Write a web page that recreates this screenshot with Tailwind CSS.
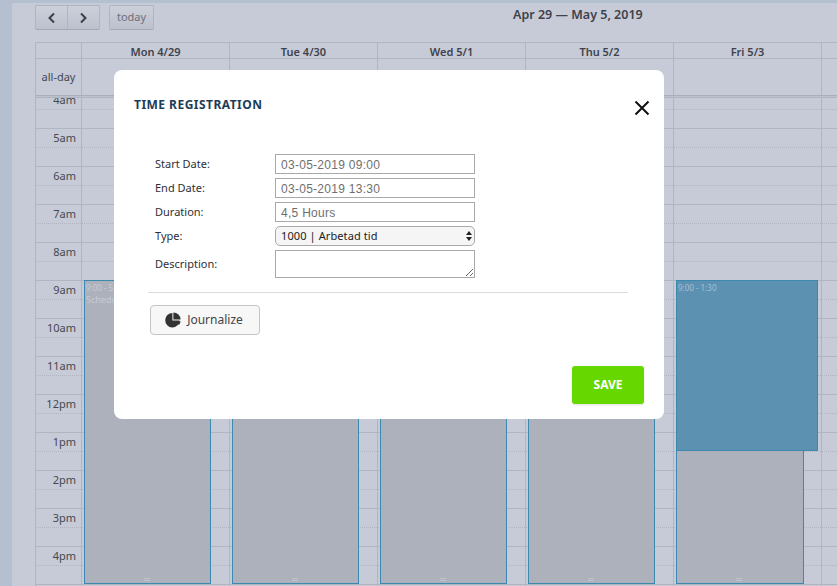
<!DOCTYPE html>
<html>
<head>
<meta charset="utf-8">
<script src="https://cdn.jsdelivr.net/npm/@tailwindcss/browser@4"></script>
</head>
<body class="m-0">
<div class="relative flex w-[837px] h-[586px] overflow-hidden bg-[#c6cbd7] font-['Noto_Sans',sans-serif] text-[#3a3d45]">
  <div class="w-[12px] shrink-0 bg-[#b4bfd0]"></div>
  <div class="flex flex-col flex-1 min-w-0">
    <div class="h-[3px] shrink-0 bg-[#b4bfd0]"></div>
    <div class="relative flex h-[39px] shrink-0 pl-[23px] pt-[2px]">
      <div class="flex h-[25px] w-[65px] border border-[#b0b5c1] border-b-[#a3a8b4] rounded-[2px] bg-gradient-to-b from-[#ccd0db] to-[#bcc1cd]">
        <div class="flex w-[32px] items-center justify-center border-r border-[#b0b5c1]">
          <svg width="9" height="12" viewBox="0 0 9 12" fill="none" stroke="#3c3f47" stroke-width="2"><path d="M7 1.5 2.5 6 7 10.5"/></svg>
        </div>
        <div class="flex flex-1 items-center justify-center">
          <svg width="9" height="12" viewBox="0 0 9 12" fill="none" stroke="#3c3f47" stroke-width="2"><path d="M2 1.5 6.5 6 2 10.5"/></svg>
        </div>
      </div>
      <div class="ml-[9px] flex h-[25px] w-[45px] items-center justify-center border border-[#b0b5c1] border-b-[#a3a8b4] rounded-[2px] bg-gradient-to-b from-[#ccd0db] to-[#bcc1cd] text-[11px] text-[#6d717b]">today</div>
      <div class="ml-[359px] -mt-[2px] h-[24px] leading-[24px] text-[12.5px] font-semibold text-[#3f424b] whitespace-nowrap">Apr 29 — May 5, 2019</div>
    </div>
    <div class="flex-1 min-h-0 ml-[23px] border-t border-l border-[#b0b5c1] flex flex-col">
      <div class="flex h-[16px] shrink-0 border-b border-[#b0b5c1] text-[11px] font-semibold leading-[17px] text-[#3f424b] text-center">
        <div class="w-[46px] border-r border-[#b0b5c1]"></div>
        <div class="w-[148px] border-r border-[#b0b5c1]">Mon 4/29</div>
        <div class="w-[148px] border-r border-[#b0b5c1]">Tue 4/30</div>
        <div class="w-[148px] border-r border-[#b0b5c1]">Wed 5/1</div>
        <div class="w-[148px] border-r border-[#b0b5c1]">Thu 5/2</div>
        <div class="w-[148px] border-r border-[#b0b5c1]">Fri 5/3</div>
        <div class="flex-1"></div>
      </div>
      <div class="flex h-[37px] shrink-0 border-b border-[#a9aebb] text-[11px]">
        <div class="w-[46px] border-r border-[#b0b5c1] flex items-center justify-center text-[#454851] pt-[1px]">all-day</div>
        <div class="w-[148px] border-r border-[#b0b5c1]"></div>
        <div class="w-[148px] border-r border-[#b0b5c1]"></div>
        <div class="w-[148px] border-r border-[#b0b5c1]"></div>
        <div class="w-[148px] border-r border-[#b0b5c1]"></div>
        <div class="w-[148px] border-r border-[#b0b5c1]"></div>
        <div class="flex-1"></div>
      </div>
      <div class="h-[2px] shrink-0 bg-[#bcc1cd] border-b border-[#b0b5c1]"></div>
      <div class="relative flex-1 min-h-0 overflow-hidden">
        <div class="-mt-[7px] text-[11px] leading-[17px] text-[#454851] text-right">
          <div class="h-[38px] border-b border-[#b0b5c1]"><div class="h-[19px] border-b border-dotted border-[#b0b5c1] w-full pr-[761px] box-border">4am</div></div>
          <div class="h-[38px] border-b border-[#b0b5c1]"><div class="h-[19px] border-b border-dotted border-[#b0b5c1] w-full pr-[761px] box-border">5am</div></div>
          <div class="h-[38px] border-b border-[#b0b5c1]"><div class="h-[19px] border-b border-dotted border-[#b0b5c1] w-full pr-[761px] box-border">6am</div></div>
          <div class="h-[38px] border-b border-[#b0b5c1]"><div class="h-[19px] border-b border-dotted border-[#b0b5c1] w-full pr-[761px] box-border">7am</div></div>
          <div class="h-[38px] border-b border-[#b0b5c1]"><div class="h-[19px] border-b border-dotted border-[#b0b5c1] w-full pr-[761px] box-border">8am</div></div>
          <div class="h-[38px] border-b border-[#b0b5c1]"><div class="h-[19px] border-b border-dotted border-[#b0b5c1] w-full pr-[761px] box-border">9am</div></div>
          <div class="h-[38px] border-b border-[#b0b5c1]"><div class="h-[19px] border-b border-dotted border-[#b0b5c1] w-full pr-[761px] box-border">10am</div></div>
          <div class="h-[38px] border-b border-[#b0b5c1]"><div class="h-[19px] border-b border-dotted border-[#b0b5c1] w-full pr-[761px] box-border">11am</div></div>
          <div class="h-[38px] border-b border-[#b0b5c1]"><div class="h-[19px] border-b border-dotted border-[#b0b5c1] w-full pr-[761px] box-border">12pm</div></div>
          <div class="h-[38px] border-b border-[#b0b5c1]"><div class="h-[19px] border-b border-dotted border-[#b0b5c1] w-full pr-[761px] box-border">1pm</div></div>
          <div class="h-[38px] border-b border-[#b0b5c1]"><div class="h-[19px] border-b border-dotted border-[#b0b5c1] w-full pr-[761px] box-border">2pm</div></div>
          <div class="h-[38px] border-b border-[#b0b5c1]"><div class="h-[19px] border-b border-dotted border-[#b0b5c1] w-full pr-[761px] box-border">3pm</div></div>
          <div class="h-[38px] border-b border-[#b0b5c1]"><div class="h-[19px] border-b border-dotted border-[#b0b5c1] w-full pr-[761px] box-border">4pm</div></div>
        </div>
        <div class="absolute inset-0 flex">
          <div class="w-[46px] border-r border-[#b0b5c1]"></div>
          <div class="w-[148px] border-r border-[#b0b5c1]"></div>
          <div class="w-[148px] border-r border-[#b0b5c1]"></div>
          <div class="w-[148px] border-r border-[#b0b5c1]"></div>
          <div class="w-[148px] border-r border-[#b0b5c1]"></div>
          <div class="w-[148px] border-r border-[#b0b5c1]"></div>
        </div>
      </div>
    </div>
  </div>

  <!-- events -->
  <div class="absolute left-[84px] top-[280px] w-[127px] h-[304px] border border-[#3c88ae] bg-[#adb1bc] text-[#c6cbd7] px-[1px]">
    <div class="text-[8px] leading-[13px]">9:00 - 5:00</div>
    <div class="text-[9px] leading-[11px]">Scheduled</div>
    <div class="absolute bottom-[2px] left-[59px] w-[6px] h-[3px] border-y border-[#c0c4ce]"></div>
  </div>
  <div class="absolute left-[232px] top-[280px] w-[127px] h-[304px] border border-[#3c88ae] bg-[#adb1bc]"><div class="absolute bottom-[2px] left-[59px] w-[6px] h-[3px] border-y border-[#c0c4ce]"></div></div>
  <div class="absolute left-[380px] top-[280px] w-[127px] h-[304px] border border-[#3c88ae] bg-[#adb1bc]"><div class="absolute bottom-[2px] left-[59px] w-[6px] h-[3px] border-y border-[#c0c4ce]"></div></div>
  <div class="absolute left-[528px] top-[280px] w-[127px] h-[304px] border border-[#3c88ae] bg-[#adb1bc]"><div class="absolute bottom-[2px] left-[59px] w-[6px] h-[3px] border-y border-[#c0c4ce]"></div></div>
  <div class="absolute left-[676px] top-[280px] w-[128px] h-[304px] border border-[#3c88ae] bg-[#adb1bc]"><div class="absolute bottom-[2px] left-[59px] w-[6px] h-[3px] border-y border-[#c0c4ce]"></div></div>
  <div class="absolute left-[676px] top-[280px] w-[142px] h-[171px] border border-[#3c88ae] bg-[#5c91b2] text-[8px] leading-[13px] text-[#a9bfd0] px-[1px]">9:00 - 1:30</div>

  <!-- modal -->
  <div class="absolute left-[114px] top-[70px] w-[550px] h-[349px] rounded-[8px] bg-white">
    <div class="flex items-start justify-between pl-[20px] pr-[14px] pt-[26px] h-[66px]">
      <div class="text-[12px] leading-[17px] font-bold tracking-[0.47px] text-[#1d3c57]">TIME REGISTRATION</div>
      <svg class="mt-[4px]" width="16" height="16" viewBox="0 0 16 16" fill="none" stroke="#111" stroke-width="2"><path d="M1.5 1.5 14.5 14.5M14.5 1.5 1.5 14.5"/></svg>
    </div>
    <div class="pl-[41px] mt-[18px] flex flex-col gap-[4px] text-[11px] text-[#2e3036]">
      <div class="flex items-center h-[20px]"><label class="w-[120px]">Start Date:</label><input readonly value="03-05-2019 09:00" class="w-[200px] h-[20px] border border-[#a9a9a9] px-[5px] pt-[1px] text-[12px] text-[#6f6f6f] font-['Liberation_Sans',sans-serif] tracking-[0.28px] outline-none"></div>
      <div class="flex items-center h-[20px]"><label class="w-[120px]">End Date:</label><input readonly value="03-05-2019 13:30" class="w-[200px] h-[20px] border border-[#a9a9a9] px-[5px] pt-[1px] text-[12px] text-[#6f6f6f] font-['Liberation_Sans',sans-serif] tracking-[0.28px] outline-none"></div>
      <div class="flex items-center h-[20px]"><label class="w-[120px]">Duration:</label><input readonly value="4,5 Hours" class="w-[200px] h-[20px] border border-[#a9a9a9] px-[5px] pt-[1px] text-[12px] text-[#6f6f6f] font-['Liberation_Sans',sans-serif] tracking-[0.28px] outline-none"></div>
      <div class="flex items-center h-[20px]"><label class="w-[120px]">Type:</label>
        <div class="relative w-[200px] h-[20px]">
          <select class="appearance-none w-full h-full border border-[#a9a9a9] rounded-[5px] bg-[#f5f5f5] pl-[5px] text-[11px] tracking-[0.1px] text-[#222] outline-none"><option>1000 | Arbetad tid</option></select>
          <svg class="absolute right-[3px] top-[5px]" width="6" height="10" viewBox="0 0 6 10" fill="#222"><path d="M3 0 6 4H0ZM3 10 0 6H6Z"/></svg>
        </div>
      </div>
      <div class="flex items-start h-[28px]"><label class="w-[120px] mt-[6px]">Description:</label><textarea class="w-[200px] h-[28px] border border-[#a9a9a9] outline-none"></textarea></div>
    </div>
    <div class="ml-[34px] mr-[36px] mt-[14px] border-t border-[#dcdcdc]"></div>
    <div class="ml-[36px] mt-[12px] flex h-[30px] w-[110px] items-center justify-center gap-[6px] pr-[2px] rounded-[4px] border border-[#c4c4c4] bg-[#f7f7f7] text-[12px] text-[#444]">
      <svg width="16" height="16" viewBox="0 0 16 16" fill="#333"><path d="M7.4 1A7.2 7.2 0 1 0 14.6 8.6H7.4Z"/><path d="M8.4 0.4A7.2 7.2 0 0 1 15.6 7.4H8.4Z"/><path d="M9.4 9.2h6.2a7 7 0 0 1-1.6 3.8Z"/></svg>
      <span>Journalize</span>
    </div>
    <div class="absolute right-[20px] bottom-[15px] flex h-[38px] w-[72px] items-center justify-center rounded-[3px] bg-[#66d800] text-[12px] font-bold text-white shadow-sm">SAVE</div>
  </div>
</div>
</body>
</html>
